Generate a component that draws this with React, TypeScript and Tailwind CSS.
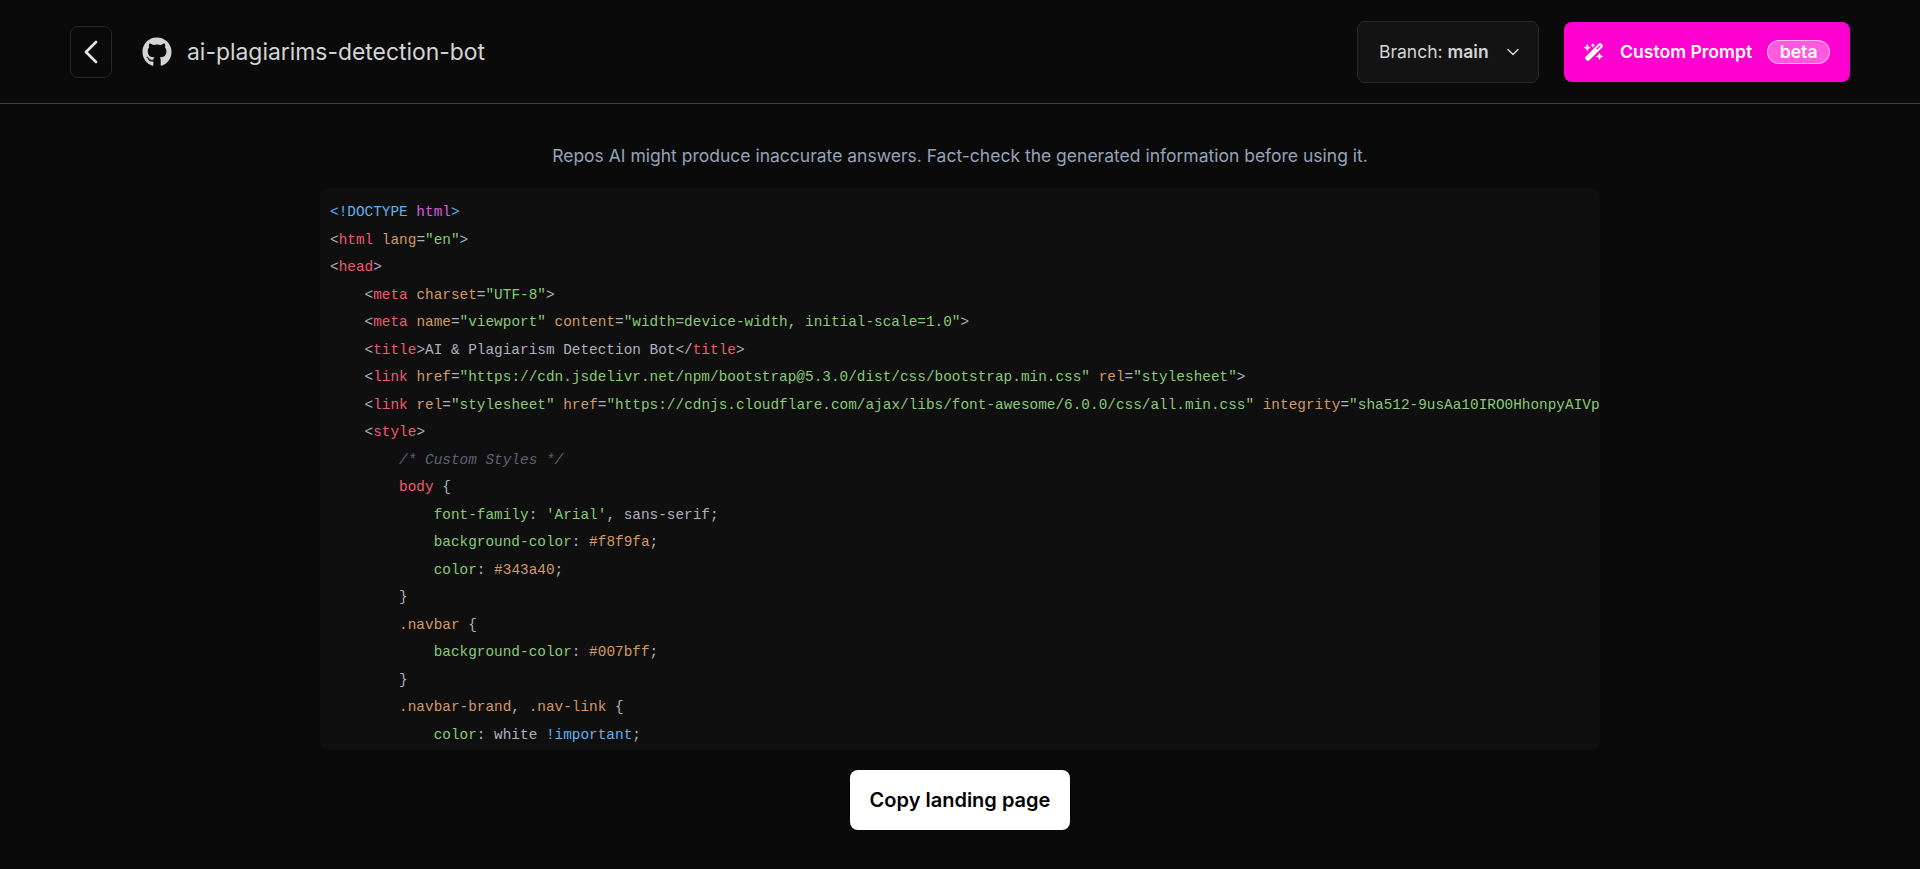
import React from "react";
import { ChevronLeft, ChevronDown } from "lucide-react";
import { FaGithub, FaWandMagicSparkles } from "react-icons/fa6";

type Tok = [string, string];

const P = "text-[#abb2bf]";
const T = "text-[#ef596f]";
const A = "text-[#d19a66]";
const S = "text-[#89ca78]";
const B = "text-[#61afef]";
const M = "text-[#d55fde]";
const C = "text-[#5c6370] italic";

// one row per line of the highlighted file
const lines: { indent: number; toks: Tok[] }[] = [
  { indent: 0, toks: [[B, "<!DOCTYPE "], [M, "html"], [B, ">"]] },
  { indent: 0, toks: [[P, "<"], [T, "html"], [P, " "], [A, "lang"], [P, "="], [S, '"en"'], [P, ">"]] },
  { indent: 0, toks: [[P, "<"], [T, "head"], [P, ">"]] },
  { indent: 4, toks: [[P, "<"], [T, "meta"], [P, " "], [A, "charset"], [P, "="], [S, '"UTF-8"'], [P, ">"]] },
  { indent: 4, toks: [[P, "<"], [T, "meta"], [P, " "], [A, "name"], [P, "="], [S, '"viewport"'], [P, " "], [A, "content"], [P, "="], [S, '"width=device-width, initial-scale=1.0"'], [P, ">"]] },
  { indent: 4, toks: [[P, "<"], [T, "title"], [P, ">AI & Plagiarism Detection Bot</"], [T, "title"], [P, ">"]] },
  { indent: 4, toks: [[P, "<"], [T, "link"], [P, " "], [A, "href"], [P, "="], [S, '"https://cdn.jsdelivr.net/npm/bootstrap@5.3.0/dist/css/bootstrap.min.css"'], [P, " "], [A, "rel"], [P, "="], [S, '"stylesheet"'], [P, ">"]] },
  { indent: 4, toks: [[P, "<"], [T, "link"], [P, " "], [A, "rel"], [P, "="], [S, '"stylesheet"'], [P, " "], [A, "href"], [P, "="], [S, '"https://cdnjs.cloudflare.com/ajax/libs/font-awesome/6.0.0/css/all.min.css"'], [P, " "], [A, "integrity"], [P, "="], [S, '"sha512-9usAa10IRO0HhonpyAIVpjrylPvoDwiPUiKdWk5t3PyolY1cOd4DSE0Ga+ri4AuTroPR5aQvXU9xC6qOPnzFeg=="'], [P, ">"]] },
  { indent: 4, toks: [[P, "<"], [T, "style"], [P, ">"]] },
  { indent: 8, toks: [[C, "/* Custom Styles */"]] },
  { indent: 8, toks: [[T, "body"], [P, " {"]] },
  { indent: 12, toks: [[S, "font-family"], [P, ": "], [S, "'Arial'"], [P, ", sans-serif;"]] },
  { indent: 12, toks: [[S, "background-color"], [P, ": "], [A, "#f8f9fa"], [P, ";"]] },
  { indent: 12, toks: [[S, "color"], [P, ": "], [A, "#343a40"], [P, ";"]] },
  { indent: 8, toks: [[P, "}"]] },
  { indent: 8, toks: [[A, ".navbar"], [P, " {"]] },
  { indent: 12, toks: [[S, "background-color"], [P, ": "], [A, "#007bff"], [P, ";"]] },
  { indent: 8, toks: [[P, "}"]] },
  { indent: 8, toks: [[A, ".navbar-brand"], [P, ", "], [A, ".nav-link"], [P, " {"]] },
  { indent: 12, toks: [[S, "color"], [P, ": white "], [B, "!important"], [P, ";"]] },
];

const App = () => {
  return (
    <div className="flex flex-col items-center w-full h-[869px] overflow-hidden bg-[#0a0a0a] font-['Inter',sans-serif]">
      {/* header */}
      <header className="flex items-center justify-between w-full h-[104px] pl-[70px] pr-[70px] border-b border-[#374151]">
        <div className="flex items-center">
          <button className="flex items-center justify-center w-[42px] h-[52px] rounded-lg border border-[#27272a] text-[#e5e5e5]">
            <ChevronLeft size={40} strokeWidth={1.6} />
          </button>
          <FaGithub className="ml-[30px] text-[#d4d4d4]" size={30} />
          <h1 className="ml-[15px] pt-[2px] text-[22.9px] font-normal text-[#d4d4d4]">ai-plagiarims-detection-bot</h1>
        </div>
        <div className="flex items-center gap-[25px]">
          <button className="flex items-center h-[62px] w-[182px] pl-[21px] rounded-lg border border-[#27272a] bg-[#131313] text-[#d4d4d4] text-[17.5px]">
            <span className="pt-[2px]">Branch: <b className="font-semibold">main</b></span>
            <ChevronDown className="ml-[14px]" size={20} strokeWidth={1.75} />
          </button>
          <button className="flex items-center h-[60px] w-[286px] pl-[20px] rounded-lg bg-[#ff00d0] text-white text-[17.6px] font-semibold">
            <FaWandMagicSparkles size={20} />
            <span className="ml-[16px] pt-[2px]">Custom Prompt</span>
            <span className="flex items-center justify-center ml-[15px] w-[63px] h-[24px] pt-[1px] rounded-full border border-white/60 bg-white/35">beta</span>
          </button>
        </div>
      </header>

      <p className="mt-[39px] text-[17.5px] leading-[26px] text-[#94a3b8]">
        Repos AI might produce inaccurate answers. Fact-check the generated information before using it.
      </p>

      {/* code block */}
      <div className="mt-[19px] w-[1280px] h-[562px] px-[10px] pt-[11px] overflow-hidden rounded-lg bg-[#0f0f0f] font-['Liberation_Mono',monospace] text-[14.4px] leading-[27.5px]">
        {lines.map((line, i) => (
          <div key={i} className="whitespace-pre">
            {" ".repeat(line.indent)}
            {line.toks.map(([cls, text], j) => (
              <span key={j} className={cls}>{text}</span>
            ))}
          </div>
        ))}
      </div>

      <button className="mt-[20px] w-[220px] h-[60px] rounded-lg bg-white text-black text-[20px] font-semibold">
        Copy landing page
      </button>
    </div>
  );
};

export default App;
